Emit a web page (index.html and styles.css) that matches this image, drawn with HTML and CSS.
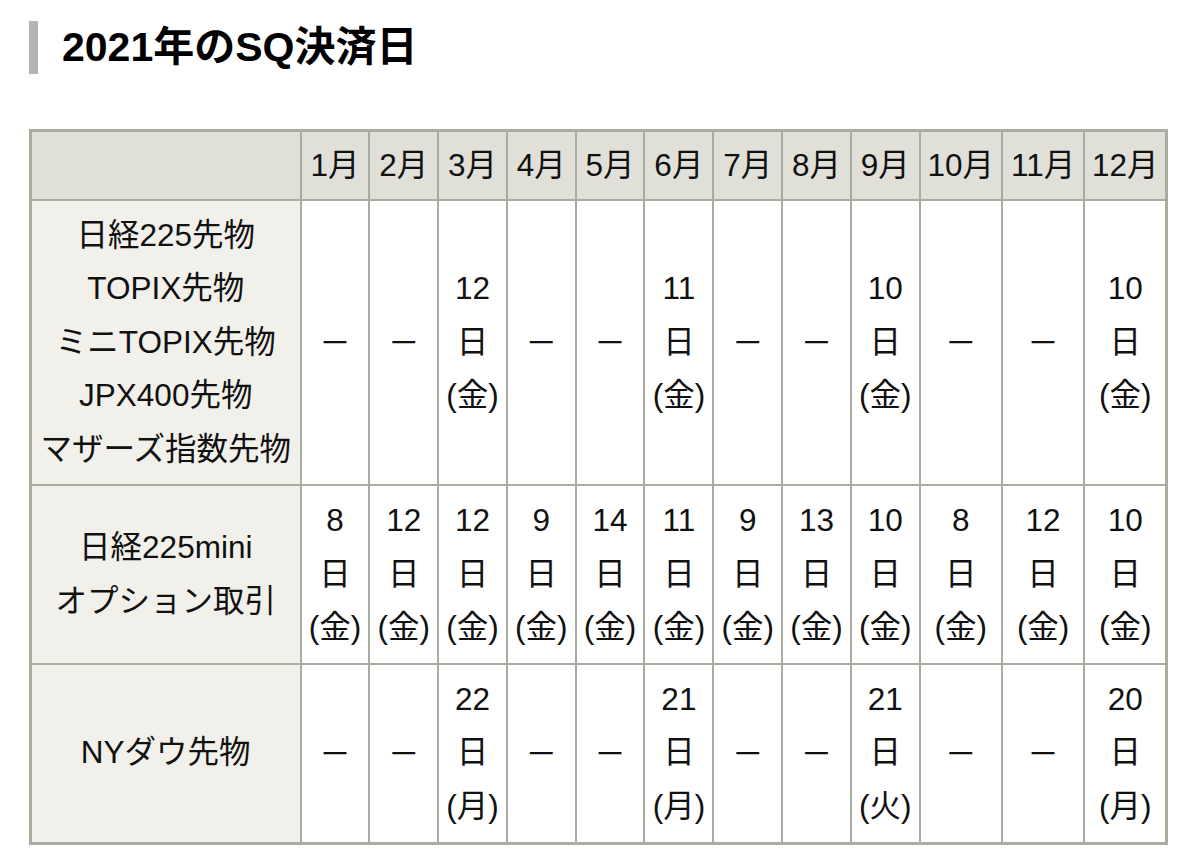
FILE: index.html
```html
<!DOCTYPE html>
<html lang="ja">
<head>
<meta charset="utf-8">
<title>2021年のSQ決済日</title>
<link rel="stylesheet" href="styles.css">
</head>
<body>
<div class="page">
  <h2 class="heading">2021年のSQ決済日</h2>
  <table class="sq-table">
    <colgroup>
      <col class="col-name">
      <col class="col-m"><col class="col-m"><col class="col-m"><col class="col-m"><col class="col-m"><col class="col-m"><col class="col-m"><col class="col-m"><col class="col-m">
      <col class="col-w"><col class="col-w"><col class="col-w">
    </colgroup>
    <thead>
      <tr>
        <th class="head"></th>
        <th class="head">1月</th><th class="head">2月</th><th class="head">3月</th><th class="head">4月</th><th class="head">5月</th><th class="head">6月</th><th class="head">7月</th><th class="head">8月</th><th class="head">9月</th><th class="head">10月</th><th class="head">11月</th><th class="head">12月</th>
      </tr>
    </thead>
    <tbody>
      <tr>
        <th class="name">日経225先物<br>TOPIX先物<br>ミニTOPIX先物<br>JPX400先物<br>マザーズ指数先物</th>
        <td><span class="dash">－</span></td>
        <td><span class="dash">－</span></td>
        <td>12<br>日<br>(金)</td>
        <td><span class="dash">－</span></td>
        <td><span class="dash">－</span></td>
        <td>11<br>日<br>(金)</td>
        <td><span class="dash">－</span></td>
        <td><span class="dash">－</span></td>
        <td>10<br>日<br>(金)</td>
        <td><span class="dash">－</span></td>
        <td><span class="dash">－</span></td>
        <td>10<br>日<br>(金)</td>
      </tr>
      <tr>
        <th class="name">日経225mini<br>オプション取引</th>
        <td>8<br>日<br>(金)</td>
        <td>12<br>日<br>(金)</td>
        <td>12<br>日<br>(金)</td>
        <td>9<br>日<br>(金)</td>
        <td>14<br>日<br>(金)</td>
        <td>11<br>日<br>(金)</td>
        <td>9<br>日<br>(金)</td>
        <td>13<br>日<br>(金)</td>
        <td>10<br>日<br>(金)</td>
        <td>8<br>日<br>(金)</td>
        <td>12<br>日<br>(金)</td>
        <td>10<br>日<br>(金)</td>
      </tr>
      <tr>
        <th class="name">NYダウ先物</th>
        <td><span class="dash">－</span></td>
        <td><span class="dash">－</span></td>
        <td>22<br>日<br>(月)</td>
        <td><span class="dash">－</span></td>
        <td><span class="dash">－</span></td>
        <td>21<br>日<br>(月)</td>
        <td><span class="dash">－</span></td>
        <td><span class="dash">－</span></td>
        <td>21<br>日<br>(火)</td>
        <td><span class="dash">－</span></td>
        <td><span class="dash">－</span></td>
        <td>20<br>日<br>(月)</td>
      </tr>
    </tbody>
  </table>
</div>
</body>
</html>
```

FILE: styles.css
```css
html, body {
  margin: 0;
  padding: 0;
  background: #ffffff;
}

body {
  font-family: "Liberation Sans", Arial, "Noto Sans CJK JP", sans-serif;
  color: #111111;
}

.page {
  padding: 21px 0 0 29px;
}

.heading {
  margin: 0 0 55px 0;
  padding-left: 24px;
  border-left: 9px solid #b4b4b4;
  font-size: 41px;
  line-height: 53px;
  font-weight: bold;
  color: #000000;
}

.sq-table {
  border-collapse: collapse;
  table-layout: fixed;
  width: 1139px;
  border: 3px solid #a8ad9f;
  font-size: 31.5px;
  line-height: 1.7;
}

.col-name { width: 270px; }
.col-m { width: 68.8px; }
.col-w { width: 82.3px; }

.sq-table th,
.sq-table td {
  border: 2px solid #a8ad9f;
  padding: 8px 2px;
  text-align: center;
  vertical-align: middle;
  font-weight: normal;
  white-space: nowrap;
}

.sq-table .head {
  background: #e0dfd8;
  padding-top: 7px;
  padding-bottom: 6px;
}

.sq-table .name {
  background: #f1f0ea;
}

.sq-table td {
  background: #ffffff;
}

.dash {
  font-family: "Noto Sans CJK JP", sans-serif;
}
```
